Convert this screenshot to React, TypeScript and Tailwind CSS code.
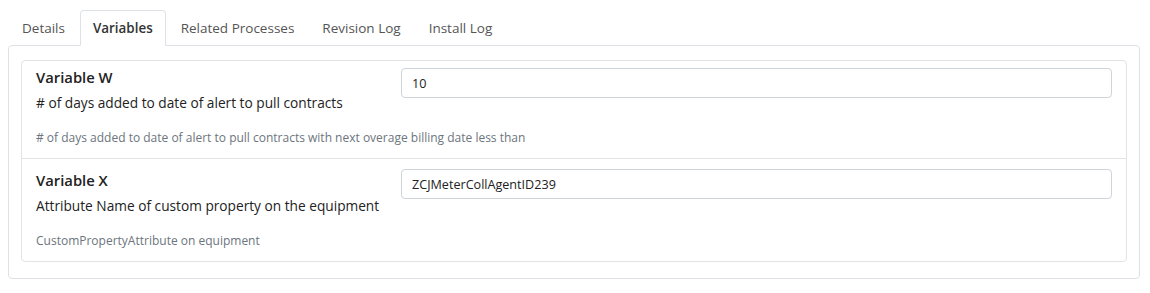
import React from 'react';

const tabs = ['Details', 'Variables', 'Related Processes', 'Revision Log', 'Install Log'];

const variables = [
  {
    name: 'Variable W',
    description: '# of days added to date of alert to pull contracts',
    value: '10',
    help: '# of days added to date of alert to pull contracts with next overage billing date less than',
    pad: 'pt-[5px]',
    inputPad: 'mt-[2px]',
  },
  {
    name: 'Variable X',
    description: 'Attribute Name of custom property on the equipment',
    value: 'ZCJMeterCollAgentID239',
    help: 'CustomPropertyAttribute on equipment',
    pad: 'pt-[10px]',
    inputPad: 'mt-0',
  },
];

export default function App() {
  return (
    <div className="w-[1150px] h-[293px] bg-white text-[#212529] font-['Open_Sans',sans-serif] pt-[10px] pl-[8px] pr-[10px]">
      {/* Tabs */}
      <div className="flex gap-[2px] pl-[1px]">
        {tabs.map((t, i) => (
          <div
            key={t}
            className={
              i === 1
                ? 'h-[36px] -mb-px px-[12px] flex items-center border border-[#dee2e6] border-b-white rounded-t-[4px] bg-white font-semibold text-[13.4px] text-[#333] relative z-10'
                : 'h-[36px] -mb-px px-[12px] flex items-center border border-transparent text-[13.5px] text-[#555]'
            }
          >
            {t}
          </div>
        ))}
      </div>

      {/* Card */}
      <div className="border border-[#dee2e6] rounded-[4px] px-[12px] pt-[14px] pb-[16px]">
        <div className="border border-[#e3e3e3] rounded-[4px]">
          {variables.map((v, i) => (
            <div
              key={v.name}
              className={`flex px-[14px] pb-[10px] ${v.pad} ${i > 0 ? 'border-t border-[#e3e3e3]' : ''}`}
            >
              <div className="w-[365px] shrink-0">
                <div className="text-[14.8px] leading-[22px] font-semibold text-[#222]">{v.name}</div>
                <div className="text-[13.7px] leading-[22px] mt-[4px] text-[#222] whitespace-nowrap">{v.description}</div>
                <div className="text-[12px] leading-[20px] mt-[14px] text-[#6c757d] whitespace-nowrap">{v.help}</div>
              </div>
              <div className={`flex-1 ${v.inputPad}`}>
                <input
                  readOnly
                  value={v.value}
                  className="w-full h-[30px] border border-[#ced4da] rounded-[4px] px-[10px] text-[12.6px] text-[#222] outline-none"
                />
              </div>
            </div>
          ))}
        </div>
      </div>
    </div>
  );
}
